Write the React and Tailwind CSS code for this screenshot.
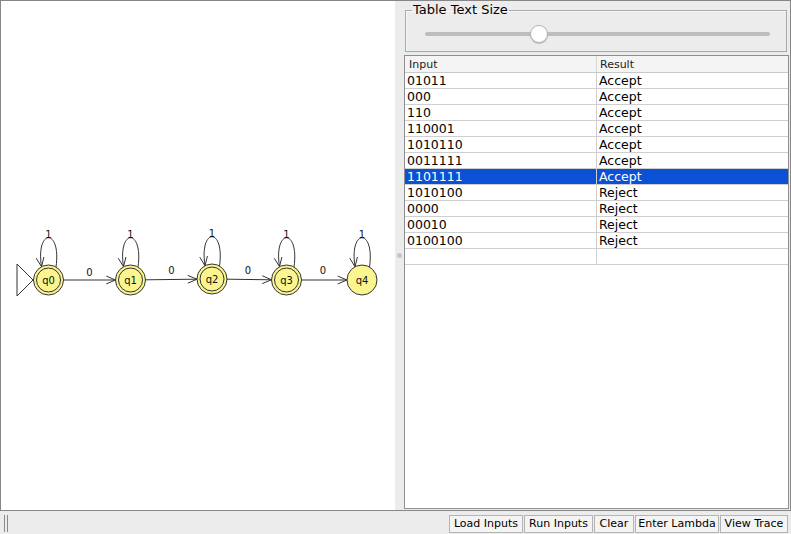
import React from "react";

const rows = [
  ["01011", "Accept"],
  ["000", "Accept"],
  ["110", "Accept"],
  ["110001", "Accept"],
  ["1010110", "Accept"],
  ["0011111", "Accept"],
  ["1101111", "Accept"],
  ["1010100", "Reject"],
  ["0000", "Reject"],
  ["00010", "Reject"],
  ["0100100", "Reject"],
];

const selected = 6;

const states = [
  { id: "q0", x: 48.5, y: 280, final: true },
  { id: "q1", x: 130.5, y: 280, final: true },
  { id: "q2", x: 212, y: 279, final: true },
  { id: "q3", x: 286.5, y: 280, final: true },
  { id: "q4", x: 362, y: 280, final: false },
];

const edges = [
  { from: 0, to: 1, lx: 89.5, ly: 275.5 },
  { from: 1, to: 2, lx: 171.5, ly: 273.5 },
  { from: 2, to: 3, lx: 248, ly: 273.5 },
  { from: 3, to: 4, lx: 323, ly: 273.5 },
];

const buttons = [
  ["Load Inputs", "w-[74px]"],
  ["Run Inputs", "w-[69px]"],
  ["Clear", "w-[40px]"],
  ["Enter Lambda", "w-[84px]"],
  ["View Trace", "w-[68px]"],
];

// open "V" arrow head, tip at (x,y) pointing along angle a
const Arrow = ({ x, y, a }) => {
  const len = 10;
  const spread = 0.4;
  const p1 = [x - len * Math.cos(a - spread), y - len * Math.sin(a - spread)];
  const p2 = [x - len * Math.cos(a + spread), y - len * Math.sin(a + spread)];
  return (
    <path
      d={`M${p1[0]} ${p1[1]} L${x} ${y} L${p2[0]} ${p2[1]}`}
      fill="none"
      stroke="#333"
      strokeWidth="1"
    />
  );
};

const Loop = ({ x, y }) => {
  const sx = x + 7.5, sy = y - 13;
  const ex = x - 7, ey = y - 13.3;
  const c1 = [x + 13, y - 52];
  const c2 = [x - 13, y - 52];
  const a = Math.atan2(ey - c2[1], ex - c2[0]);
  return (
    <g>
      <path
        d={`M${sx} ${sy} C${c1[0]} ${c1[1]} ${c2[0]} ${c2[1]} ${ex} ${ey}`}
        fill="none"
        stroke="#333"
        strokeWidth="1"
      />
      <Arrow x={ex} y={ey} a={a} />
      <text x={x} y={y - 42} textAnchor="middle" fontSize="10" fill="#111" fontFamily="DejaVu Sans, sans-serif">
        1
      </text>
    </g>
  );
};

const Diagram = () => (
  <svg width="394" height="509" viewBox="1 1 394 509" className="block">
    {/* start marker */}
    <path d="M17 264 L33 280 L17 296 Z" fill="#fff" stroke="#333" strokeWidth="1" />

    {edges.map((e, i) => {
      const a = states[e.from];
      const b = states[e.to];
      const ang = Math.atan2(b.y - a.y, b.x - a.x);
      const x1 = a.x + 15 * Math.cos(ang), y1 = a.y + 15 * Math.sin(ang);
      const x2 = b.x - 15 * Math.cos(ang), y2 = b.y - 15 * Math.sin(ang);
      return (
        <g key={i}>
          <line x1={x1} y1={y1} x2={x2} y2={y2} stroke="#333" strokeWidth="1" />
          <Arrow x={x2} y={y2} a={ang} />
          <text x={e.lx} y={e.ly} textAnchor="middle" fontSize="10" fill="#111" fontFamily="DejaVu Sans, sans-serif">
            0
          </text>
        </g>
      );
    })}

    {states.map((s) => (
      <g key={s.id}>
        <Loop x={s.x} y={s.y} />
        <circle cx={s.x} cy={s.y} r="15" fill="#fbf590" stroke="#333" strokeWidth="1" />
        {s.final && <circle cx={s.x} cy={s.y} r="12" fill="none" stroke="#333" strokeWidth="1" />}
        <text x={s.x} y={s.y + 3.5} textAnchor="middle" fontSize="10" fill="#111" fontFamily="DejaVu Sans, sans-serif">
          {s.id}
        </text>
      </g>
    ))}
  </svg>
);

const Row = ({ input, result, active }) => (
  <div
    className={`flex h-[16px] border-b border-[#cfcfcf] text-[12.5px] leading-[15px] ${
      active ? "bg-[#0b51d5] text-white" : "text-black"
    }`}
  >
    <div className="w-[192px] shrink-0 border-r border-[#cfcfcf] pl-[2px] overflow-hidden whitespace-nowrap">{input}</div>
    <div className="flex-1 pl-[2px] overflow-hidden whitespace-nowrap">{result}</div>
  </div>
);

export default function App() {
  return (
    <div className="w-[791px] h-[534px] flex flex-col bg-[#ececec] font-['DejaVu_Sans',sans-serif] overflow-hidden">
      {/* main split area */}
      <div className="h-[511px] flex border border-[#868686]">
        {/* automaton canvas */}
        <div className="w-[394px] shrink-0 bg-white">
          <Diagram />
        </div>

        {/* splitter */}
        <div className="w-[9px] shrink-0 flex items-center justify-center">
          <div className="w-[5px] h-[5px] rounded-full bg-[#c4c4c4]" />
        </div>

        {/* right panel */}
        <div className="flex-1 flex flex-col pt-[1px] pr-[1px] pb-[1px]">
          <fieldset className="ml-[1px] mr-[2px] h-[50px] border border-[#a9a9a9] shadow-[inset_1px_1px_0_#f8f8f8]">
            <legend className="ml-[6px] px-[1px] text-[13px] leading-[16px] text-black">Table Text Size</legend>
            <div className="relative ml-[19px] mr-[16px] mt-[7px] h-[18px] flex items-center">
              <div className="w-full h-[4px] rounded-full bg-[#bdbdbd]" />
              <div className="absolute left-[105px] top-0 w-[18px] h-[18px] rounded-full bg-white border border-[#b3b3b3] shadow-[0_1px_1px_rgba(0,0,0,0.2)]" />
            </div>
          </fieldset>

          {/* results table */}
          <div className="mt-[3px] flex-1 bg-white border border-[#8f8f8f] overflow-hidden">
            <div className="flex h-[17px] bg-[#f4f4f4] border-b border-[#c9c9c9] text-[11px] leading-[17px] text-[#222]">
              <div className="w-[192px] shrink-0 border-r border-[#d6d6d6] pl-[4px]">Input</div>
              <div className="flex-1 pl-[3px]">Result</div>
            </div>
            {rows.map(([input, result], i) => (
              <Row key={i} input={input} result={result} active={i === selected} />
            ))}
            <Row input="" result="" active={false} />
          </div>
        </div>
      </div>

      {/* status bar */}
      <div className="flex-1 flex items-start pt-[4px] pl-[4px] pr-[3px]">
        <div className="flex gap-[2px] h-[17px]">
          <div className="w-[1px] h-full bg-[#8a8a8a]" />
          <div className="w-[1px] h-full bg-[#8a8a8a]" />
        </div>
        <div className="ml-auto flex gap-[1px]">
          {buttons.map(([label, w]) => (
            <button
              key={label}
              className={`${w} h-[18px] bg-[#f4f4f4] border border-[#b4b4b4] text-[11px] leading-[16px] text-black text-center whitespace-nowrap`}
            >
              {label}
            </button>
          ))}
        </div>
      </div>
    </div>
  );
}
